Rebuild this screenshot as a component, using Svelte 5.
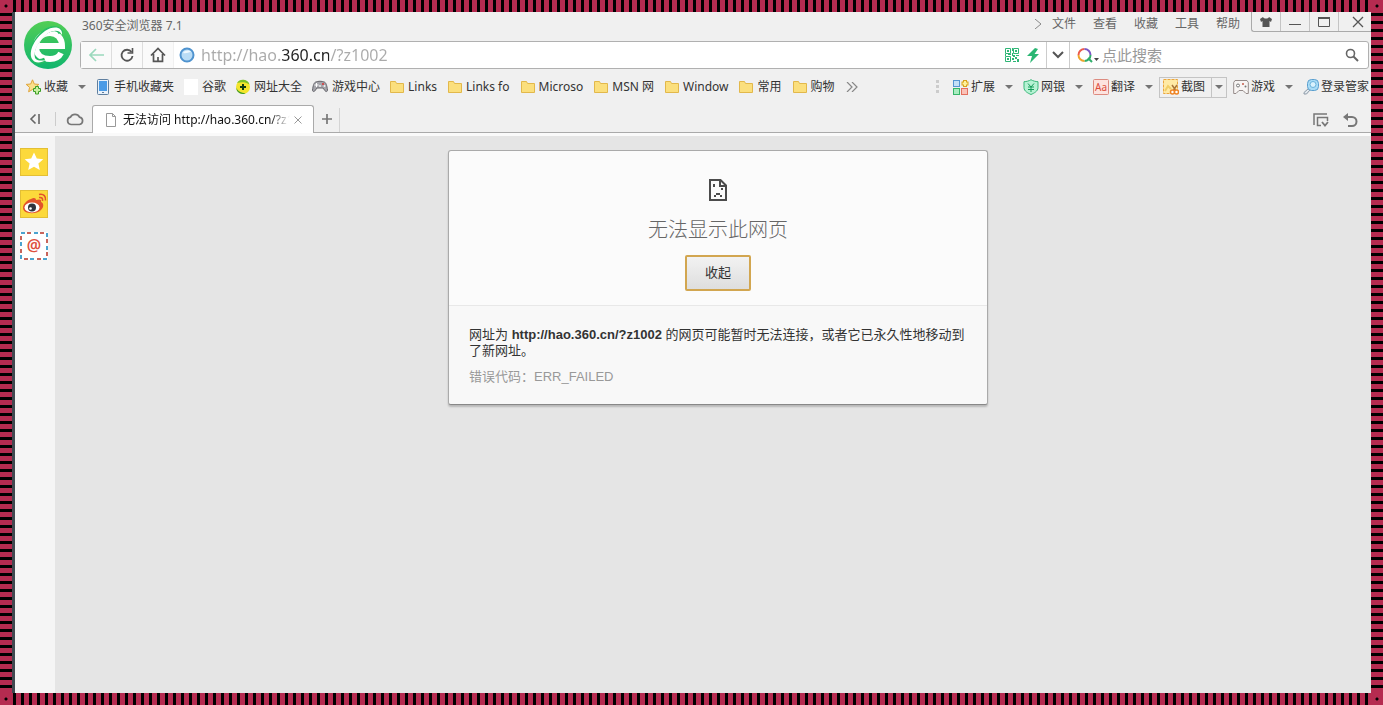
<script lang="ts">
	type Bookmark = { label: string; icon: string };

	const menus = ['文件', '查看', '收藏', '工具', '帮助'];

	const bookmarks: Bookmark[] = [
		{ label: '手机收藏夹', icon: 'phone' },
		{ label: '谷歌', icon: 'blank' },
		{ label: '网址大全', icon: 'plus' },
		{ label: '游戏中心', icon: 'gamepad' },
		{ label: 'Links', icon: 'folder' },
		{ label: 'Links fo', icon: 'folder' },
		{ label: 'Microso', icon: 'folder' },
		{ label: 'MSN 网', icon: 'folder' },
		{ label: 'Window', icon: 'folder' },
		{ label: '常用', icon: 'folder' },
		{ label: '购物', icon: 'folder' }
	];

	const tools: Bookmark[] = [
		{ label: '扩展', icon: 'apps' },
		{ label: '网银', icon: 'shield' },
		{ label: '翻译', icon: 'translate' },
		{ label: '截图', icon: 'scissors' },
		{ label: '游戏', icon: 'pad' },
		{ label: '登录管家', icon: 'key' }
	];

	let url = $state('http://hao.360.cn/?z1002');
	let query = $state('');
	let expanded = $state(true);
</script>

<svelte:head>
	<title>无法访问 http://hao.360.cn/?z1002</title>
</svelte:head>

{#snippet icon(name: string)}
	{#if name === 'phone'}
		<svg class="icon" viewBox="0 0 14 16">
			<rect x="1.5" y="0.5" width="11" height="15" rx="1" fill="#e8f1fa" stroke="#5f7f9f" />
			<rect x="3" y="2" width="8" height="10" fill="#4a9be6" />
			<rect x="6" y="13" width="2" height="1" fill="#5f7f9f" />
		</svg>
	{:else if name === 'blank'}
		<svg class="icon" viewBox="0 0 14 16"><rect width="14" height="16" fill="#fff" /></svg>
	{:else if name === 'plus'}
		<svg class="icon" viewBox="0 0 14 16">
			<circle cx="7" cy="8" r="7" fill="#f4e52c" />
			<path d="M1 4a7 7 0 0 1 12.500 1.500C9 2.500 5 3 1 4z" fill="#7cc12a" />
			<path d="M0 8.500c2 4 5 5 9.500 6A7 7 0 0 1 0 8.500z" fill="#3f9c2b" />
			<path d="M7 5v6M4 8h6" stroke="#123c12" stroke-width="2" />
		</svg>
	{:else if name === 'gamepad'}
		<svg class="icon wide" viewBox="0 0 16 14">
			<path d="M4 2c2-1 6-1 8 0 2 0 3 4 3.500 8 0 2-2 2-3 0L11 8H5l-1.500 2c-1 2-3 2-3 0C1 6 2 2 4 2z" fill="#a5a5ab" stroke="#66666c" />
			<path d="M4.500 3v4M2.500 5h4" stroke="#fff" />
			<circle cx="11" cy="4" r="1" fill="#d33" />
			<circle cx="12.500" cy="6" r="1" fill="#f0f0f0" />
			<circle cx="8" cy="6" r="1" fill="#eee" />
		</svg>
	{:else if name === 'folder'}
		<svg class="icon" viewBox="0 0 14 14">
			<path d="M.5 1.500h5l1 2h7v9H.5z" fill="#fbdf7d" stroke="#e2b84b" />
		</svg>
	{:else if name === 'apps'}
		<svg class="tool-icon" viewBox="0 0 16 16">
			<rect x="0.500" y="1.500" width="6" height="6" fill="#c5e0f7" stroke="#5796d2" />
			<rect x="0.500" y="9.500" width="6" height="6" fill="#a9ecc0" stroke="#36b569" />
			<rect x="8.500" y="9.500" width="6" height="6" fill="#fac2b8" stroke="#e3705f" />
			<path d="M12 1v7M8.500 4.500h7" stroke="#d8a31c" stroke-width="4" />
			<path d="M12 2v5M9.500 4.500h5" stroke="#fff29b" stroke-width="2" />
		</svg>
	{:else if name === 'shield'}
		<svg class="tool-icon" viewBox="0 0 16 16">
			<path d="M8 .7C6 2 3.500 2.600 1 2.700v6c0 3.500 4 5.500 7 6.800 3-1.300 7-3.300 7-6.800v-6C12.500 2.600 10 2 8 .7z" fill="#b7f2d4" stroke="#37b678" />
			<path d="M5 4.500l3 3.500 3-3.500M5 8h6M5 10.500h6M8 8v5" fill="none" stroke="#179c5b" />
		</svg>
	{:else if name === 'translate'}
		<svg class="tool-icon" viewBox="0 0 16 16">
			<rect x="0.500" y="0.500" width="15" height="15" rx="1" fill="#fde3df" stroke="#dc8b80" />
			<text x="8" y="12" text-anchor="middle" font-size="10" fill="#dc4c3b">Aa</text>
		</svg>
	{:else if name === 'scissors'}
		<svg class="tool-icon" viewBox="0 0 16 16">
			<rect x="0.500" y="0.500" width="14" height="14" fill="#ffeaa5" stroke="#eba63c" stroke-dasharray="3 1" />
			<path d="M2 12l3-5 3 3" fill="none" stroke="#f1ce67" stroke-width="2" />
			<path d="M9 6l3.500 5M14 6l-3.500 5" stroke="#a9763a" stroke-width="1.500" />
			<circle cx="9.500" cy="13" r="2" fill="#fff" stroke="#ef8424" stroke-width="1.500" />
			<circle cx="13.500" cy="13" r="2" fill="#fff" stroke="#ef8424" stroke-width="1.500" />
		</svg>
	{:else if name === 'pad'}
		<svg class="tool-icon" viewBox="0 0 16 16">
			<path d="M2 1.500h12l1.300 2v11h-2.300l-3-3H6l-3 3H.7v-11z" fill="#f8f5f4" stroke="#958b89" />
			<circle cx="5" cy="6.500" r="1.500" fill="#fff" stroke="#777" />
			<circle cx="10" cy="5" r="1" fill="#c45b4b" />
			<circle cx="12.500" cy="7.500" r="1" fill="#777" />
		</svg>
	{:else if name === 'key'}
		<svg class="tool-icon" viewBox="0 0 16 16">
			<path d="M5.500 9.500L1 13.500V15h2.500l3.500-4" fill="#e3e9ee" stroke="#8b98a6" />
			<rect x="4.500" y="0.500" width="11" height="11" rx="4" fill="#a9dcf6" stroke="#5b9fce" />
			<circle cx="10" cy="5.500" r="3" fill="#d9f2fd" stroke="#6bb3dc" />
		</svg>
	{/if}
{/snippet}

{#snippet arrow()}
	<svg class="arrow" viewBox="0 0 8 4"><path d="M0 0h8L4 4z" fill="#747474" /></svg>
{/snippet}

<div class="frame">
	<div class="window">
		<header class="top">
			<svg class="logo" viewBox="0 0 48 48" role="img" aria-label="360">
				<defs>
					<linearGradient id="logo-bg" x1="0" y1="0" x2="0" y2="1">
						<stop offset="0" stop-color="#52ce55" />
						<stop offset="1" stop-color="#10b56e" />
					</linearGradient>
				</defs>
				<circle cx="24" cy="24" r="24" fill="url(#logo-bg)" />
				<!-- кольцо и перекладина -->
				<path d="M15 25h23c0-8-5-13-12-13-8 0-14 6-14 14s6 12 14 12c5 0 9-2 11-6" fill="none" stroke="#fff" stroke-width="6" />
				<!-- орбита поверх кольца -->
				<path d="M37 12c-2-5-9-6-16-1C13 17 6 29 9 37c2 4 7 4 12 2" fill="none" stroke="#27bd65" stroke-width="5" />
				<path d="M38 14c1-8-8-10-17-4C11 17 4 30 8 38c3 5 9 4 14 1-5 1-9 1-11-2-2-7 4-18 12-24 7-5 13-4 15 1z" fill="#fff" />
			</svg>

			<div class="title-row">
				<span class="app-title">360安全浏览器 7.1</span>
				<nav class="menu">
					<svg class="more" viewBox="0 0 8 10"><path d="M1 0l6 5-6 5" fill="none" stroke="#888" /></svg>
					{#each menus as item (item)}
						<button>{item}</button>
					{/each}
				</nav>
				<div class="window-buttons">
					<button aria-label="皮肤">
						<svg width="14" height="12" viewBox="0 0 14 12"><path d="M4 1c1 2 5 2 6 0l3 2-1 3-1.500-1v6h-7V5L2 6 1 3z" fill="#555" /></svg>
					</button>
					<button aria-label="最小化">
						<svg width="14" height="12" viewBox="0 0 14 12"><path d="M1 8.500h12" stroke="#555" /></svg>
					</button>
					<button aria-label="最大化">
						<svg width="14" height="12" viewBox="0 0 14 12"><path d="M1.500 2h11v8.500h-11z" fill="none" stroke="#555" /><path d="M1 2h12" stroke="#555" stroke-width="2" /></svg>
					</button>
					<button aria-label="关闭">
						<svg width="12" height="12" viewBox="0 0 12 12"><path d="M1 1l10 10M11 1L1 11" stroke="#555" stroke-width="1.300" /></svg>
					</button>
				</div>
			</div>

			<div class="address-row">
				<button class="nav-btn" aria-label="后退">
					<svg width="16" height="14" viewBox="0 0 16 14"><path d="M8 1L2 7l6 6M2 7h14" fill="none" stroke="#9bd9bd" stroke-width="1.700" /></svg>
				</button>
				<button class="nav-btn" aria-label="刷新">
					<svg width="16" height="16" viewBox="0 0 16 16"><path d="M12.500 5A5.500 5.500 0 1 0 13.500 9" fill="none" stroke="#555" stroke-width="1.800" /><path d="M13.500 1v5h-5" fill="none" stroke="#555" stroke-width="1.600" /></svg>
				</button>
				<button class="nav-btn last" aria-label="主页">
					<svg width="16" height="16" viewBox="0 0 16 16"><path d="M1 8.500L8 1.500l7 7M3.500 7v7.300h9V7M8 14v-4" fill="none" stroke="#555" stroke-width="1.700" /></svg>
				</button>
				<svg class="globe" viewBox="0 0 16 16">
					<circle cx="8" cy="8" r="6.500" fill="#b9dcf6" stroke="#4f93cf" stroke-width="2" />
					<path d="M4 6c2-3 6-3 8-1-3 0-4 2-8 1z" fill="#eef8ff" />
				</svg>
				<input class="url" type="text" aria-label="地址" bind:value={url} />
				<svg class="qr" viewBox="0 0 14 14">
					<path d="M.5.500h5v5h-5zM.5 8.500h5v5h-5zM8.500.500h5v5h-5z" fill="none" stroke="#2fb676" />
					<path d="M2 2h2v2H2zM10 2h2v2h-2zM2 10h2v2H2zM7 0h1v3H7zM7 5h1v3H7zM8 7h2v2H8zM11 7h3v1h-3zM10 9h2v2h-2zM12 11h2v3h-2zM7 10h2v2H7zM8 13h3v1H8zM3 6h3v1H3zM0 6h1v2H0z" fill="#2fb676" />
				</svg>
				<svg class="bolt" viewBox="0 0 12 15"><path d="M8 0L0 8h5L3 15l9-9H7.500L11 1z" fill="#2bb673" /></svg>
				<button class="drop" aria-label="展开地址">
					<svg width="12" height="8" viewBox="0 0 12 8"><path d="M1 1l5 5 5-5" fill="none" stroke="#555" stroke-width="2" /></svg>
				</button>
				<div class="search">
					<svg class="engine" viewBox="0 0 16 16">
						<g fill="none" stroke-width="2">
							<path d="M1.500 8a6 6 0 0 1 6-6" stroke="#ec5b4c" />
							<path d="M7.500 2a6 6 0 0 1 6 6" stroke="#7a58c6" />
							<path d="M13.500 8a6 6 0 0 1-6 6" stroke="#2fae6b" />
							<path d="M7.500 14a6 6 0 0 1-6-6" stroke="#efa52c" />
							<path d="M11 11l4 4" stroke="#2fae6b" />
						</g>
					</svg>
					<svg class="engine-arrow" viewBox="0 0 5 3"><path d="M0 0h5L2.500 3z" fill="#444" /></svg>
					<input type="search" aria-label="搜索" placeholder="点此搜索" bind:value={query} />
					<button aria-label="搜索">
						<svg width="14" height="14" viewBox="0 0 14 14"><circle cx="5.500" cy="5.500" r="4" fill="none" stroke="#666" stroke-width="1.600" /><path d="M8.500 8.500l4.500 4.500" stroke="#666" stroke-width="2" /></svg>
					</button>
				</div>
			</div>
		</header>

		<div class="bookmark-bar">
			<nav class="bookmarks">
				<button class="bookmark">
					<svg class="fav" viewBox="0 0 16 16">
						<path d="M6.500.800l1.800 4.200 4.500.400-3.400 3 1 4.400-3.900-2.300-3.900 2.300 1-4.400-3.400-3L4.700 5z" fill="#fbe08a" stroke="#e0a43b" />
						<path d="M9.500 7.500h3v2h2v3h-2v2.500h-3v-2.500h-2v-3h2z" fill="#c9f0a3" stroke="#3c9e25" />
					</svg>
					<span>收藏</span>
					{@render arrow()}
				</button>
				{#each bookmarks as item (item.label)}
					<a class="bookmark" class:folder={item.icon === 'folder'} href="#{item.label}">
						{@render icon(item.icon)}
						<span>{item.label}</span>
					</a>
				{/each}
				<button class="bookmark" aria-label="更多收藏">
					<svg width="12" height="10" viewBox="0 0 12 10"><path d="M1 0l5 5-5 5M6 0l5 5-5 5" fill="none" stroke="#888" stroke-width="1.200" /></svg>
				</button>
			</nav>
			<div class="tools">
				<svg class="grip" viewBox="0 0 3 14"><path d="M0 0h3v3H0zM0 5h3v3H0zM0 10h3v3H0z" fill="#ccc" /></svg>
				{#each tools as item (item.label)}
					<button class="tool" class:active={item.icon === 'scissors'}>
						{@render icon(item.icon)}
						<span>{item.label}</span>
						{#if item.icon !== 'key'}
							{@render arrow()}
						{/if}
					</button>
				{/each}
			</div>
		</div>

		<div class="tab-bar">
			<button class="side-toggle" aria-label="收起侧边栏">
				<svg width="12" height="12" viewBox="0 0 12 12"><path d="M6.500 1.500L2 6l4.500 4.500M10 1v10" fill="none" stroke="#666" stroke-width="1.600" /></svg>
			</button>
			<button class="cloud" aria-label="云同步">
				<svg width="18" height="14" viewBox="0 0 18 14"><path d="M5 12.500a3.700 3.700 0 0 1-.5-7.300 5 5 0 0 1 9 0 3.700 3.700 0 0 1 0 7.300z" fill="none" stroke="#777" stroke-width="1.700" /></svg>
			</button>
			<div class="tab">
				<svg class="page" viewBox="0 0 12 14"><path d="M1.500.500h6l3 3v10h-9zM7.500.500v3h3" fill="#fff" stroke="#999" /></svg>
				<span class="tab-title">无法访问 http://hao.360.cn/?z1002</span>
				<button aria-label="关闭标签页">
					<svg width="8" height="8" viewBox="0 0 8 8"><path d="M.5.500l7 7M7.500.500l-7 7" stroke="#999" /></svg>
				</button>
			</div>
			<button class="new-tab" aria-label="新建标签页">
				<svg width="12" height="12" viewBox="0 0 12 12"><path d="M6 1v10M1 6h10" stroke="#777" stroke-width="1.700" /></svg>
			</button>
			<div class="tab-actions">
				<button aria-label="标签列表">
					<svg width="16" height="14" viewBox="0 0 16 14"><path d="M1 12V1h13M14.500 8V4.500h-10v8H8" fill="none" stroke="#777" stroke-width="1.500" /><path d="M9 9l3 3.500L15 9" fill="none" stroke="#777" stroke-width="1.800" /></svg>
				</button>
				<button aria-label="恢复标签页">
					<svg width="16" height="14" viewBox="0 0 16 14"><path d="M3 4h7a4.400 4.400 0 0 1 0 9H6" fill="none" stroke="#777" stroke-width="2" /><path d="M1 4l5-4v8z" fill="#777" /></svg>
				</button>
			</div>
		</div>

		<div class="body">
			<aside class="sidebar">
				<button aria-label="收藏">
					<svg viewBox="0 0 28 28">
						<rect x="0.500" y="0.500" width="27" height="27" fill="#fcd93b" stroke="#e3bf35" />
						<path d="M14 4.500l2.800 6 6.500.700-4.900 4.400 1.400 6.500-5.800-3.300-5.800 3.300 1.400-6.500-4.900-4.400 6.500-.700z" fill="#fff" />
					</svg>
				</button>
				<button aria-label="微博">
					<svg viewBox="0 0 28 28">
						<rect x="0.500" y="0.500" width="27" height="27" fill="#fcd93b" stroke="#e3bf35" />
						<path d="M11 9c3-2 5-1 5 1 3-1 6-1 5 2 3 1 3 5 0 8-5 5-18 4-18-2 0-4 4-8 8-9z" fill="#e2532c" />
						<ellipse cx="12" cy="17.500" rx="7.500" ry="5" fill="#fff" />
						<circle cx="12" cy="17.500" r="4" fill="#30323c" />
						<circle cx="10.500" cy="18.500" r="1.300" fill="#fff" />
						<path d="M19 7.500c3-.5 4 1 3.500 3.500M19 4.500c5-1 7 2 6.500 6" fill="none" stroke="#e2532c" stroke-width="1.500" />
					</svg>
				</button>
				<button aria-label="邮箱">
					<svg viewBox="0 0 28 28">
						<rect width="28" height="28" fill="#fff" />
						<rect x="1" y="1" width="26" height="26" fill="none" stroke="#4ba3cf" stroke-width="2" stroke-dasharray="4 9" />
						<rect x="1" y="1" width="26" height="26" fill="none" stroke="#c9645a" stroke-width="2" stroke-dasharray="4 9" stroke-dashoffset="-6" />
						<text x="14" y="19" text-anchor="middle" font-size="16" font-weight="600" fill="#dd5040">@</text>
					</svg>
				</button>
			</aside>

			<main class="content">
				<section class="card">
					<div class="card-top">
						<svg class="sad" viewBox="0 0 18 22">
							<path d="M1 1h10.500L17 6.500V21H1z" fill="none" stroke="#4b4b4b" stroke-width="2" />
							<path d="M11 1v6h6" fill="none" stroke="#4b4b4b" stroke-width="2" />
							<path d="M4 5h2v3H4zM12 9h2v2h-2zM5 16h2v2H5zM7 14h4v2H7zM11 16h2v2h-2z" fill="#4b4b4b" />
						</svg>
						<h1>无法显示此网页</h1>
						<button class="toggle" onclick={() => (expanded = !expanded)}>{expanded ? '收起' : '更多'}</button>
					</div>
					{#if expanded}
						<div class="details">
							<p>网址为 <strong>http://hao.360.cn/?z1002</strong> 的网页可能暂时无法连接，或者它已永久性地移动到了新网址。</p>
							<p class="code">错误代码：ERR_FAILED</p>
						</div>
					{/if}
				</section>
			</main>
		</div>
	</div>
</div>

<style>
	:global(body) {
		margin: 0;
	}

	.frame {
		--red: #b52b50;
		box-sizing: border-box;
		display: flex;
		min-height: 100vh;
		padding: 12px;
		font-family: 'Noto Sans', 'Noto Sans CJK SC', sans-serif;
		font-size: 12px;
		line-height: 16px;
		color: #333;
		background:
			radial-gradient(circle, #000 1px, var(--red) 2px) 0 0 / 12px 12px no-repeat,
			radial-gradient(circle, #000 1px, var(--red) 2px) 100% 0 / 12px 12px no-repeat,
			radial-gradient(circle, #000 1px, var(--red) 2px) 0 100% / 12px 12px no-repeat,
			radial-gradient(circle, #000 1px, var(--red) 2px) 100% 100% / 12px 12px no-repeat,
			repeating-linear-gradient(90deg, var(--red) 0 5px, #000 5px 8px) 0 0 / 100% 12px no-repeat,
			repeating-linear-gradient(90deg, var(--red) 0 5px, #000 5px 8px) 0 100% / 100% 12px no-repeat,
			repeating-linear-gradient(180deg, var(--red) 0 5px, #000 5px 8px);
	}

	.window {
		flex: 1;
		min-width: 0;
		display: flex;
		flex-direction: column;
		border-left: 3px solid #414850;
		background: #f0f0f0;
	}

	button {
		display: flex;
		align-items: center;
		justify-content: center;
		flex: none;
		margin: 0;
		padding: 0;
		border: 0;
		background: none;
		font: inherit;
		color: inherit;
	}

	svg {
		flex: none;
		display: block;
	}

	input {
		min-width: 0;
		padding: 0;
		border: 0;
		outline: 0;
		background: none;
		font: inherit;
	}

	/* шапка: логотип, меню, адресная строка */
	.top {
		display: grid;
		grid-template-columns: 65px 1fr;
		grid-template-rows: 29px 28px;
	}

	.logo {
		grid-row: 1 / 3;
		align-self: end;
		justify-self: center;
		width: 48px;
		height: 48px;
	}

	.title-row {
		display: flex;
		align-items: flex-start;
		color: #666;
	}

	.app-title {
		padding: 6px 2px;
	}

	.menu {
		display: flex;
		align-items: center;
		gap: 17px;
		height: 24px;
		margin-left: auto;
		margin-right: 11px;
	}

	.more {
		width: 8px;
		height: 10px;
		margin-right: -7px;
	}

	.window-buttons {
		display: flex;
		border: 1px solid #aaa;
		border-width: 0 0 1px 1px;
		border-radius: 0 0 0 3px;
	}

	.window-buttons button {
		width: 29px;
		height: 19px;
		box-sizing: border-box;
		border-right: 1px solid #c4c4c4;
	}

	.window-buttons button:last-child {
		width: 32px;
		padding-left: 6px;
		border: 0;
	}

	.address-row {
		display: flex;
		align-items: center;
		box-sizing: border-box;
		margin-right: 2px;
		border: 1px solid #b0b0b0;
		border-radius: 3px;
		background: #fff;
	}

	.nav-btn {
		box-sizing: border-box;
		width: 31px;
		height: 26px;
		border-right: 1px solid #ddd;
		background: #fafafa;
	}

	.nav-btn.last {
		border-color: #f0f0f0;
	}

	.globe {
		width: 16px;
		height: 16px;
		margin: 0 6px 0 5px;
	}

	/* домен выделен тёмным, остальная часть адреса серая */
	.url {
		flex: 1;
		height: 26px;
		font-size: 16px;
		color: transparent;
		caret-color: #333;
		background: linear-gradient(90deg, #aaa 79px, #222 79px 128px, #aaa 128px);
		background-clip: text;
	}

	.qr {
		width: 14px;
		height: 14px;
		margin-right: 8px;
	}

	.bolt {
		width: 12px;
		height: 15px;
		margin-right: 7px;
	}

	.drop {
		width: 24px;
		height: 26px;
		border: 1px solid #ccc;
		border-width: 0 1px;
	}

	.search {
		display: flex;
		align-items: center;
		box-sizing: border-box;
		width: 298px;
		padding: 0 9px 0 7px;
	}

	.engine {
		width: 16px;
		height: 16px;
	}

	.engine-arrow {
		width: 5px;
		height: 3px;
		margin: 9px 3px 0 1px;
	}

	.search input {
		flex: 1;
		height: 26px;
		font-size: 15px;
	}

	.search input::placeholder {
		color: #999;
	}

	/* закладки */
	.bookmark-bar {
		display: flex;
		align-items: center;
		justify-content: space-between;
		height: 36px;
		padding: 0 2px 0 11px;
		white-space: nowrap;
	}

	.bookmarks {
		display: flex;
		align-items: center;
		gap: 10px;
		min-width: 0;
		overflow: hidden;
	}

	.bookmark {
		display: flex;
		align-items: center;
		gap: 4px;
		color: inherit;
		text-decoration: none;
	}

	.bookmark.folder {
		padding-right: 1px;
	}

	.icon {
		width: 14px;
		height: 16px;
	}

	.icon.wide {
		width: 16px;
	}

	.fav {
		width: 16px;
		height: 16px;
		margin-right: -2px;
	}

	.arrow {
		width: 8px;
		height: 4px;
	}

	.bookmark .arrow {
		margin-left: 6px;
	}

	.tools {
		display: flex;
		align-items: center;
		gap: 10px;
		flex: none;
	}

	.grip {
		width: 3px;
		height: 14px;
		margin-right: 4px;
	}

	.tool {
		gap: 2px;
	}

	.tool-icon {
		width: 16px;
		height: 16px;
	}

	.tool .arrow {
		margin-left: 8px;
	}

	.tool.active {
		height: 21px;
		margin: 0 -4px;
		padding: 0 3px;
		border: 1px solid #c4c4c4;
	}

	.tool.active .arrow {
		box-sizing: content-box;
		margin-left: 4px;
		padding: 8px 0 8px 3px;
		border-left: 1px solid #c4c4c4;
	}

	/* вкладки */
	.tab-bar {
		display: flex;
		height: 27px;
		border-bottom: 1px solid #aaa;
	}

	.side-toggle {
		box-sizing: border-box;
		width: 41px;
		height: 14px;
		align-self: center;
		border-right: 1px solid #ccc;
	}

	.cloud {
		width: 36px;
		padding-left: 2px;
		box-sizing: border-box;
	}

	.tab {
		display: flex;
		align-items: center;
		box-sizing: border-box;
		width: 222px;
		height: 28px;
		padding: 0 11px 0 12px;
		border: 1px solid #aaa;
		border-bottom: 0;
		border-radius: 3px 3px 0 0;
		background: #fff;
		color: #111;
	}

	.page {
		width: 12px;
		height: 14px;
		margin-right: 6px;
	}

	.tab-title {
		flex: 1;
		overflow: hidden;
		white-space: nowrap;
		margin-right: 4px;
		mask-image: linear-gradient(90deg, #000 88%, transparent);
	}

	.new-tab {
		box-sizing: border-box;
		width: 26px;
		height: 24px;
		margin-top: 3px;
		padding-bottom: 2px;
		border-right: 1px solid #d4d4d4;
	}

	.tab-actions {
		display: flex;
		gap: 13px;
		margin-left: auto;
		padding: 2px 13px 0 0;
	}

	/* страница */
	.body {
		flex: 1;
		display: flex;
		border-top: 3px solid #fafafa;
		background: #e5e5e5;
	}

	.sidebar {
		flex: none;
		display: flex;
		flex-direction: column;
		align-items: flex-start;
		gap: 14px;
		box-sizing: border-box;
		width: 40px;
		padding: 12px 5px;
		background: #f5f5f5;
	}

	.sidebar svg {
		width: 28px;
		height: 28px;
	}

	.content {
		flex: 1;
		padding: 14px 0 14px 10px;
		font-family: 'Liberation Sans', 'Noto Sans CJK SC', sans-serif;
		font-size: 13px;
	}

	.card {
		box-sizing: border-box;
		max-width: 540px;
		margin: 0 auto;
		border: 1px solid #aaa;
		border-bottom-color: #888;
		border-radius: 3px;
		background: #fbfbfb;
		box-shadow: 0 2px 2px rgba(0, 0, 0, 0.2);
	}

	.card-top {
		display: flex;
		flex-direction: column;
		align-items: center;
		padding: 28px 20px 14px;
	}

	.sad {
		width: 18px;
		height: 22px;
	}

	h1 {
		margin: 17px 0 13px;
		font-size: 20px;
		line-height: 24px;
		font-weight: 300;
		color: #666;
	}

	.toggle {
		width: 66px;
		height: 36px;
		border: 2px solid #d2a650;
		border-radius: 2px;
		background: linear-gradient(#f2f2f2, #dedede);
	}

	.details {
		padding: 21px 20px 19px;
		border-top: 1px solid #e8e8e8;
		border-radius: 0 0 3px 3px;
		background: #f8f8f8;
	}

	.details p {
		margin: 0 0 10px;
	}

	.details .code {
		margin: 0;
		color: #999;
	}
</style>
